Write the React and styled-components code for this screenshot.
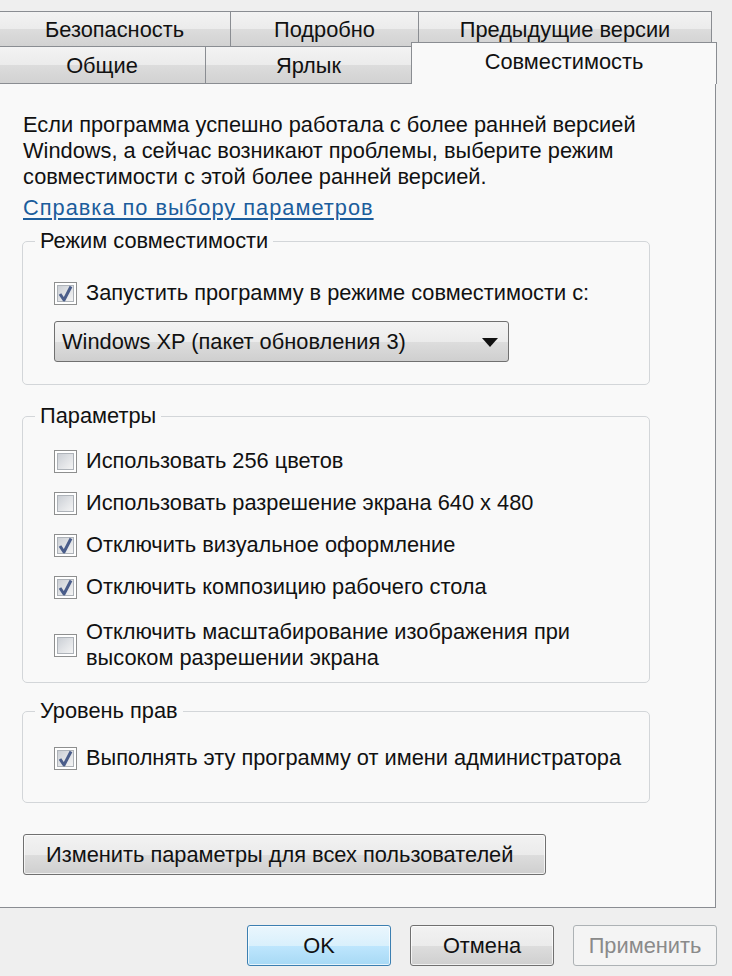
import styled, { createGlobalStyle } from "styled-components";

const GlobalStyle = createGlobalStyle`
  html, body {
    margin: 0;
    padding: 0;
    background: #f0f0f0;
  }
  body {
    font-family: "Liberation Sans", Arial, sans-serif;
    color: #111;
  }
`;

const Window = styled.div`
  width: 732px;
  height: 976px;
  overflow: hidden;
  display: flex;
  flex-direction: column;
  background: #efefef;
  font-size: 21.8px;
`;

const TabStrip = styled.div`
  padding-top: 11px;
  margin-left: -2px;
  display: flex;
  flex-direction: column;
`;

const TabRow = styled.div`
  display: flex;
  align-items: flex-end;
  height: ${(p) => p.$h}px;
`;

const Tab = styled.div`
  box-sizing: border-box;
  width: ${(p) => p.$w}px;
  height: 100%;
  display: flex;
  align-items: center;
  justify-content: center;
  border: 1px solid #8a8d92;
  border-bottom: none;
  margin-right: -1px;
  background: linear-gradient(#f3f3f3 0%, #ebebeb 50%, #dcdcdc 51%, #d2d2d2 100%);
  color: #111;
  padding-top: 2px;
`;

const ActiveTab = styled(Tab)`
  height: calc(100% + 5px);
  margin-top: -5px;
  background: #f9f9f9;
  align-items: flex-start;
  padding-top: 6px;
  position: relative;
  z-index: 1;
  margin-bottom: -1px;
`;

const Panel = styled.div`
  box-sizing: border-box;
  margin-left: -2px;
  width: 718px;
  height: 825px;
  border: 1px solid #8a8d92;
  background: #f9f9f9;
  padding: 28px 0 0 24px;
  display: flex;
  flex-direction: column;
`;

const Intro = styled.p`
  margin: 0;
  line-height: 26px;
`;

const HelpLink = styled.a`
  color: #1c5d9c;
  text-decoration: underline;
  text-underline-offset: 3px;
  line-height: 26px;
  margin-top: 5px;
  letter-spacing: 1px;
  width: fit-content;
`;

const Group = styled.fieldset`
  box-sizing: border-box;
  width: 628px;
  margin: ${(p) => p.$mt}px 0 0 -1px;
  padding: ${(p) => p.$pad};
  border: 1px solid #d3d6d9;
  border-radius: 5px;
  display: flex;
  flex-direction: column;
  gap: ${(p) => p.$gap || 0}px;
  min-inline-size: 0;
`;

const Legend = styled.legend`
  padding: 0 5px;
  margin-left: -19px;
  line-height: 24px;
`;

const CheckRow = styled.label`
  display: flex;
  align-items: center;
  gap: 9px;
  line-height: 26px;
  margin-top: ${(p) => p.$mt || 0}px;
`;

const BoxOuter = styled.span`
  box-sizing: border-box;
  flex: none;
  width: 23px;
  height: 23px;
  border: 1px solid #8e8f8f;
  background: #fff;
  padding: 2px;
  display: flex;
  position: relative;
`;

const BoxInner = styled.span`
  flex: 1;
  background: linear-gradient(135deg, #cbcfd5 0%, #e2e4e7 55%, #f4f4f4 100%);
  border: 1px solid #aeb3b9;
`;

const Tick = styled.svg`
  position: absolute;
  left: 2px;
  top: 1px;
`;

const Checkbox = ({ checked }) => (
  <BoxOuter>
    <BoxInner />
    {checked && (
      <Tick width="17" height="19" viewBox="0 0 17 19">
        <path
          d="M3 10 L7 16 L14 2.5"
          fill="none"
          stroke="#4a5d8a"
          strokeWidth="3"
          strokeLinejoin="round"
        />
      </Tick>
    )}
  </BoxOuter>
);

const Select = styled.div`
  box-sizing: border-box;
  width: 455px;
  height: 41px;
  margin-top: 15px;
  border: 1px solid #707070;
  border-radius: 3px;
  background: linear-gradient(#f4f4f4 0%, #ebebeb 50%, #dddddd 51%, #cfcfcf 100%);
  display: flex;
  align-items: center;
  justify-content: space-between;
  padding: 0 10px 0 7px;
`;

const Arrow = styled.span`
  width: 0;
  height: 0;
  border-left: 8px solid transparent;
  border-right: 8px solid transparent;
  border-top: 9px solid #111;
  margin-top: 2px;
`;

const Button = styled.button`
  box-sizing: border-box;
  font: inherit;
  font-size: 21.8px;
  width: ${(p) => p.$w}px;
  height: 41px;
  border-radius: 3px;
  padding: 0;
  border: 1px solid ${(p) => (p.$primary ? "#3c7fb1" : p.disabled ? "#adb2b5" : "#707070")};
  color: ${(p) => (p.disabled ? "#8a8a8a" : "#111")};
  background: ${(p) =>
    p.$primary
      ? "linear-gradient(#eaf6fd 0%, #d9f0fc 50%, #bee6fd 51%, #a7d9f5 100%)"
      : p.disabled
      ? "#f4f4f4"
      : "linear-gradient(#f2f2f2 0%, #ebebeb 50%, #dddddd 51%, #cfcfcf 100%)"};
  box-shadow: inset 0 0 0 1px ${(p) => (p.disabled ? "#f4f4f4" : "rgba(255,255,255,0.7)")};
`;

const WideButton = styled(Button)`
  margin-top: 31px;
  text-align: left;
  padding-left: 22px;
`;

const Footer = styled.div`
  flex: 1;
  display: flex;
  justify-content: flex-end;
  align-items: flex-start;
  gap: 19px;
  padding: 17px 15px 0 0;
`;

const options = [
  { text: "Использовать 256 цветов", checked: false },
  { text: "Использовать разрешение экрана 640 x 480", checked: false },
  { text: "Отключить визуальное оформление", checked: true },
  { text: "Отключить композицию рабочего стола", checked: true },
];

export default function App() {
  return (
    <Window>
      <GlobalStyle />
      <TabStrip>
        <TabRow $h={35}>
          <Tab $w={233}>Безопасность</Tab>
          <Tab $w={189}>Подробно</Tab>
          <Tab $w={294}>Предыдущие версии</Tab>
        </TabRow>
        <TabRow $h={37}>
          <Tab $w={208}>Общие</Tab>
          <Tab $w={207}>Ярлык</Tab>
          <ActiveTab $w={306}>Совместимость</ActiveTab>
        </TabRow>
      </TabStrip>

      <Panel>
        <Intro>
          Если программа успешно работала с более ранней версией
          <br />
          Windows, а сейчас возникают проблемы, выберите режим
          <br />
          совместимости с этой более ранней версией.
        </Intro>
        <HelpLink>Справка по выбору параметров</HelpLink>

        <Group $mt={8} $pad="27px 0 22px 31px">
          <Legend>Режим совместимости</Legend>
          <CheckRow>
            <Checkbox checked />
            Запустить программу в режиме совместимости с:
          </CheckRow>
          <Select>
            <span>Windows XP (пакет обновления 3)</span>
            <Arrow />
          </Select>
        </Group>

        <Group $mt={19} $pad="20px 0 11px 31px" $gap={16}>
          <Legend>Параметры</Legend>
          {options.map((o) => (
            <CheckRow key={o.text}>
              <Checkbox checked={o.checked} />
              {o.text}
            </CheckRow>
          ))}
          <CheckRow $mt={3}>
            <Checkbox />
            <span>
              Отключить масштабирование изображения при
              <br />
              высоком разрешении экрана
            </span>
          </CheckRow>
        </Group>

        <Group $mt={16} $pad="22px 0 31px 31px">
          <Legend>Уровень прав</Legend>
          <CheckRow>
            <Checkbox checked />
            Выполнять эту программу от имени администратора
          </CheckRow>
        </Group>

        <WideButton $w={523}>Изменить параметры для всех пользователей</WideButton>
      </Panel>

      <Footer>
        <Button $w={144} $primary>
          OK
        </Button>
        <Button $w={144}>Отмена</Button>
        <Button $w={144} disabled>
          Применить
        </Button>
      </Footer>
    </Window>
  );
}
